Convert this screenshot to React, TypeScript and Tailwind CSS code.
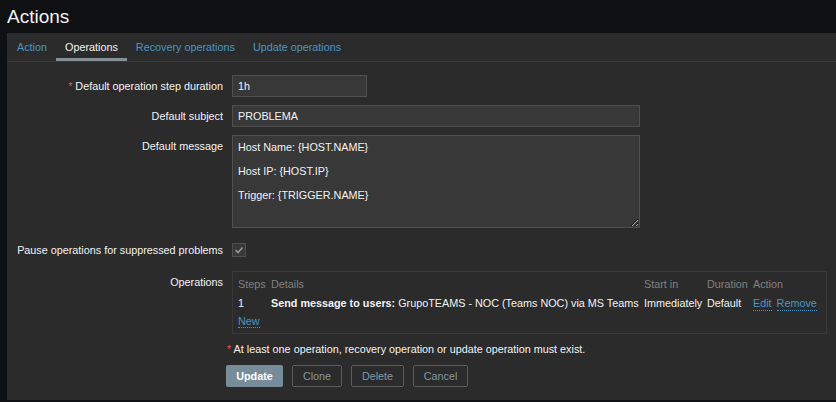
import React from "react";

const font = { fontFamily: '"Liberation Sans", Arial, sans-serif' };

function Label({ children, required }: { children: React.ReactNode; required?: boolean }) {
  return (
    <div className="w-[216px] shrink-0 whitespace-nowrap text-right leading-[22px] text-[#f2f2f2]">
      {required && <span className="text-[#e45959]">* </span>}
      {children}
    </div>
  );
}

export default function App() {
  return (
    <div className="min-h-[402px] w-[836px] overflow-hidden bg-[#0e1012] text-[10.8px]" style={font}>
      <div className="flex h-[33px] items-center pl-[7px] pb-[1px] text-[19px] leading-none text-[#f2f2f2]">Actions</div>
      <div className="ml-[7px] flex h-[367px] flex-col bg-[#2b2b2b]">
        <div className="flex h-[29px] border-b border-[#383838] pl-px">
          <div className="flex h-[28px] items-center px-[9px] text-[#4796c4]">Action</div>
          <div className="flex h-[28px] items-center border-b-[3px] border-[#858f96] px-[9px] pt-[3px] text-[#f2f2f2]">Operations</div>
          <div className="flex h-[28px] items-center px-[9px] text-[#4796c4]">Recovery operations</div>
          <div className="flex h-[28px] items-center px-[9px] text-[#4796c4]">Update operations</div>
        </div>

        <div className="flex flex-col pt-[13px]">
          <div className="flex items-start gap-[9px]">
            <Label required>Default operation step duration</Label>
            <input
              readOnly
              defaultValue="1h"
              className="h-[22px] w-[135px] border border-[#4f4f4f] bg-[#383838] px-[5px] text-[10.8px] text-[#f2f2f2] outline-none"
            />
          </div>
          <div className="mt-[8px] flex items-start gap-[9px]">
            <Label>Default subject</Label>
            <input
              readOnly
              defaultValue="PROBLEMA"
              className="h-[22px] w-[408px] border border-[#4f4f4f] bg-[#383838] px-[5px] text-[10.8px] text-[#f2f2f2] outline-none"
            />
          </div>
          <div className="mt-[8px] flex items-start gap-[9px]">
            <Label>Default message</Label>
            <textarea
              readOnly
              defaultValue={"Host Name: {HOST.NAME}\n\nHost IP: {HOST.IP}\n\nTrigger: {TRIGGER.NAME}"}
              className="h-[93px] w-[408px] resize border border-[#4f4f4f] bg-[#383838] px-[5px] pt-[5px] text-[10.8px] leading-[12px] text-[#f2f2f2] outline-none"
            />
          </div>
          <div className="mt-[11px] flex items-start gap-[9px]">
            <Label>Pause operations for suppressed problems</Label>
            <div className="mt-[4px] flex h-[14px] w-[14px] items-center justify-center border border-[#4f4f4f] bg-[#383838]">
              <svg width="10" height="10" viewBox="0 0 10 10">
                <path d="M1.5 5.2 L4 7.5 L8.5 2.5" fill="none" stroke="#8a98a2" strokeWidth="1.6" />
              </svg>
            </div>
          </div>
          <div className="mt-[10px] flex items-start gap-[9px]">
            <Label>Operations</Label>
            <div className="h-[63px] w-[595px] border border-[#383838] pl-[5px] pt-[5px]">
              <div className="grid grid-cols-[33px_373px_63px_46px_auto] leading-[14px]">
                <div className="text-[#808080]">Steps</div>
                <div className="text-[#808080]">Details</div>
                <div className="text-[#808080]">Start in</div>
                <div className="text-[#808080]">Duration</div>
                <div className="text-[#808080]">Action</div>
                <div className="mt-[5px] text-[#f2f2f2]">1</div>
                <div className="mt-[5px] whitespace-nowrap text-[#f2f2f2]">
                  <span className="font-bold">Send message to users:</span> GrupoTEAMS - NOC (Teams NOC) via MS Teams
                </div>
                <div className="mt-[5px] text-[#f2f2f2]">Immediately</div>
                <div className="mt-[5px] text-[#f2f2f2]">Default</div>
                <div className="mt-[5px] flex gap-[5px] whitespace-nowrap">
                  <span className="border-b border-dotted border-[#4796c4] text-[#4796c4]">Edit</span>
                  <span className="border-b border-dotted border-[#4796c4] text-[#4796c4]">Remove</span>
                </div>
              </div>
              <div className="mt-[3px] leading-[14px]">
                <span className="border-b border-dotted border-[#4796c4] text-[#4796c4]">New</span>
              </div>
            </div>
          </div>
          <div className="mt-[8px] pl-[220px] leading-[14px] text-[#f2f2f2]">
            <span className="text-[#e45959]">*</span> At least one operation, recovery operation or update operation must exist.
          </div>
          <div className="mt-[9px] flex gap-[9px] pl-[219px]">
            <div className="flex h-[22px] w-[57px] items-center justify-center rounded-[2px] bg-[#768d99] font-bold text-white">Update</div>
            <div className="flex h-[22px] w-[50px] items-center justify-center rounded-[2px] border border-[#5c5c5c] text-[#8497a3]">Clone</div>
            <div className="flex h-[22px] w-[53px] items-center justify-center rounded-[2px] border border-[#5c5c5c] text-[#8497a3]">Delete</div>
            <div className="flex h-[22px] w-[55px] items-center justify-center rounded-[2px] border border-[#5c5c5c] text-[#8497a3]">Cancel</div>
          </div>
        </div>
      </div>
    </div>
  );
}
